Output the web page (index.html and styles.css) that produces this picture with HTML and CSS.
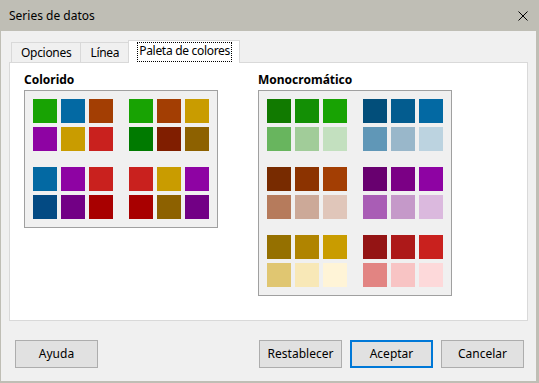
FILE: index.html
```html
<!DOCTYPE html>
<html lang="es">

<head>
    <meta charset="UTF-8">
    <meta name="viewport" content="width=device-width, initial-scale=1.0">
    <title>Series de datos</title>
    <link rel="stylesheet" href="styles.css">
</head>

<body>
    <div class="title-bar">
        <span class="title">Series de datos</span>
        <svg class="close" width="10" height="10" viewBox="0 0 10 10">
            <path d="M0.5 0.5 L9.5 9.5 M9.5 0.5 L0.5 9.5" stroke="#000" stroke-width="1" fill="none" />
        </svg>
    </div>
    <div class="dialog">
        <div class="tabs">
            <div class="tab">Opciones</div>
            <div class="tab">Línea</div>
            <div class="tab active"><span class="focus">Paleta de colores</span></div>
        </div>
        <div class="panel">
            <div class="column">
                <div class="group-label">Colorido</div>
                <div class="palette" id="colorido"></div>
            </div>
            <div class="column">
                <div class="group-label">Monocromático</div>
                <div class="palette" id="mono"></div>
            </div>
        </div>
        <div class="buttons">
            <button class="button help">Ayuda</button>
            <button class="button">Restablecer</button>
            <button class="button default">Aceptar</button>
            <button class="button">Cancelar</button>
        </div>
    </div>
    <script>
        const colorido = [
            ['#18a303', '#0369a3', '#a33e03', '#8e03a3', '#c99c00', '#c9211e'],
            ['#18a303', '#a33e03', '#c99c00', '#007a00', '#801e00', '#8d6100'],
            ['#0369a3', '#8e03a3', '#c9211e', '#034a83', '#720085', '#a80000'],
            ['#c9211e', '#c99c00', '#8e03a3', '#a80000', '#8d6100', '#720085']
        ];
        const mono = [
            ['#117a00', '#138f05', '#18a303', '#68b55e', '#a1cc99', '#c3e0bf'],
            ['#024e7a', '#035c8f', '#0369a3', '#6097b7', '#99b7ca', '#bcd3e0'],
            ['#782b00', '#8c3300', '#a33e03', '#b67b5c', '#cca998', '#e0c6ba'],
            ['#68006f', '#7b0085', '#8e03a3', '#a95db5', '#c599c9', '#dbb9de'],
            ['#957000', '#b08400', '#c99c00', '#e0c671', '#f8e8b7', '#fff4d7'],
            ['#941414', '#ad1919', '#c9211e', '#e28482', '#f8c4c4', '#fdd9da']
        ];

        function fillPalette(id, groups) {
            const box = document.getElementById(id);
            groups.forEach(function (colors) {
                const group = document.createElement('div');
                group.className = 'swatches';
                colors.forEach(function (c) {
                    const sw = document.createElement('span');
                    sw.className = 'swatch';
                    sw.style.background = c;
                    group.appendChild(sw);
                });
                box.appendChild(group);
            });
        }

        fillPalette('colorido', colorido);
        fillPalette('mono', mono);
    </script>
</body>

</html>
```

FILE: styles.css
```css
* {
    margin: 0;
    padding: 0;
    box-sizing: border-box;
}

body {
    width: 539px;
    height: 383px;
    overflow: hidden;
    background: #bfbeb5;
    font-family: 'Segoe UI', 'Noto Sans', sans-serif;
    font-size: 12px;
    color: #000;
    display: flex;
    flex-direction: column;
}

.title-bar {
    height: 31px;
    line-height: 31px;
    padding: 0 11px 0 9px;
    display: flex;
    align-items: center;
    justify-content: space-between;
}

.close {
    display: block;
}

.dialog {
    flex: 1;
    margin: 0 3px 2px 1px;
    background: #f0f0f0;
    padding-top: 9px;
    display: flex;
    flex-direction: column;
}

.tabs {
    display: flex;
    align-items: flex-end;
    margin: 0 8px;
    padding-left: 2px;
    letter-spacing: -0.3px;
}

.tab {
    height: 20px;
    line-height: 19px;
    padding: 0 9px;
    border: 1px solid #d9d9d9;
    border-bottom: 0;
    background: #f0f0f0;
    margin-left: -1px;
}

.tab:first-child {
    margin-left: 0;
}

.tab.active {
    height: 23px;
    padding: 1px 7px 1px 8px;
    background: #fff;
    margin-bottom: -1px;
    position: relative;
    z-index: 1;
}

.tab .focus {
    display: block;
    border: 1px dotted #000;
    line-height: 16px;
    padding: 0 1px 2px;
}

.panel {
    flex: 1;
    margin: 0 8px;
    border: 1px solid #d9d9d9;
    background: #fff;
    padding: 9px 14px 0;
    display: flex;
    align-items: flex-start;
    gap: 40px;
}

.group-label {
    font-weight: bold;
    line-height: 16px;
    margin-bottom: 2px;
}

.palette {
    border: 1px solid #a0a0a0;
    background: #f0f0f0;
    padding: 8px;
    display: grid;
    grid-template-columns: repeat(2, auto);
    gap: 16px;
}

.swatches {
    display: grid;
    grid-template-columns: repeat(3, 24px);
    gap: 4px;
}

.swatch {
    display: block;
    width: 24px;
    height: 24px;
}

.buttons {
    display: flex;
    gap: 8px;
    padding: 19px 12px 13px 14px;
}

.button {
    width: 83px;
    height: 28px;
    border: 1px solid #adadad;
    background: #e1e1e1;
    font: inherit;
    line-height: 26px;
    color: #000;
}

.button.help {
    margin-right: auto;
}

.button.default {
    border: 2px solid #0078d7;
    line-height: 24px;
}
```
